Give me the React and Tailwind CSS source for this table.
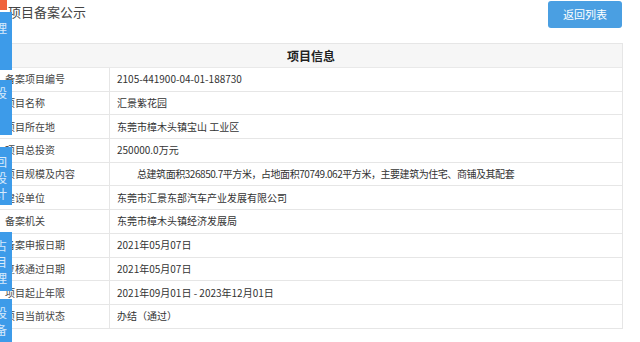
import React from "react";

const rows = [
  ["备案项目编号", "2105-441900-04-01-188730"],
  ["项目名称", "汇景紫花园"],
  ["项目所在地", "东莞市樟木头镇宝山 工业区"],
  ["项目总投资", "250000.0万元"],
  ["项目规模及内容", "总建筑面积326850.7平方米，占地面积70749.062平方米，主要建筑为住宅、商铺及其配套", true],
  ["建设单位", "东莞市汇景东部汽车产业发展有限公司"],
  ["备案机关", "东莞市樟木头镇经济发展局"],
  ["备案申报日期", "2021年05月07日"],
  ["复核通过日期", "2021年05月07日"],
  ["项目起止年限", "2021年09月01日 - 2023年12月01日"],
  ["项目当前状态", "办结（通过）"],
];

const tabs = [
  { top: 12, h: 58, chars: [["理", 22]] },
  { top: 80, h: 55, chars: [["设", 87]] },
  { top: 147, h: 58, chars: [["回", 156], ["设", 172], ["计", 188]] },
  { top: 232, h: 59, chars: [["占", 240], ["目", 256], ["理", 272]] },
  { top: 299, h: 50, chars: [["设", 307], ["备", 324]] },
];

export default function App() {
  return (
    <div
      className="relative w-[640px] h-[342px] overflow-hidden bg-white text-[#333]"
      style={{ fontFamily: '"Noto Sans CJK SC", "Noto Sans", sans-serif' }}
    >
      <div className="flex items-start justify-between pl-[8px] pr-[18px] pt-[1px]">
        <div className="mt-[2px] text-[13px] leading-[18px] text-[#444]">项目备案公示</div>
        <button className="flex h-[27px] w-[74px] items-center justify-center rounded-[3px] bg-[#4a9fe2] text-[11px] text-white">
          返回列表
        </button>
      </div>

      <div className="relative mt-[15px] w-[623px] border-r border-t border-[#e6e6e6]">
        <div className="flex h-[24px] items-center justify-center border-b border-[#e9e9e9] bg-[#f6f6f6] text-[12px] font-bold text-[#222]">
          项目信息
        </div>
        {rows.map(([k, v, indent]) => (
          <div
            key={k}
            className="grid h-[23.7px] grid-cols-[110px_1fr] border-b border-[#e6e6e6] text-[10px] leading-none"
          >
            <div className="flex items-center border-r border-[#e6e6e6] pl-[5px] text-[#444]">{k}</div>
            <div
              className={`flex items-center whitespace-nowrap ${indent ? "pl-[27px] tracking-[-0.45px]" : "pl-[7px]"}`}
            >
              {v}
            </div>
          </div>
        ))}
      </div>

      <div className="absolute left-0 top-0 h-[10px] w-[7px] bg-[#f0643c]" />
      {tabs.map((t, i) => (
        <div
          key={i}
          className="absolute left-0 w-[12px] overflow-hidden bg-[#3d9be9]"
          style={{ top: t.top, height: t.h }}
        >
          {t.chars.map(([c, y]) => (
            <span
              key={y}
              className="absolute left-[-5px] text-[12px] leading-none text-white/80"
              style={{ top: y - t.top }}
            >
              {c}
            </span>
          ))}
        </div>
      ))}
    </div>
  );
}
